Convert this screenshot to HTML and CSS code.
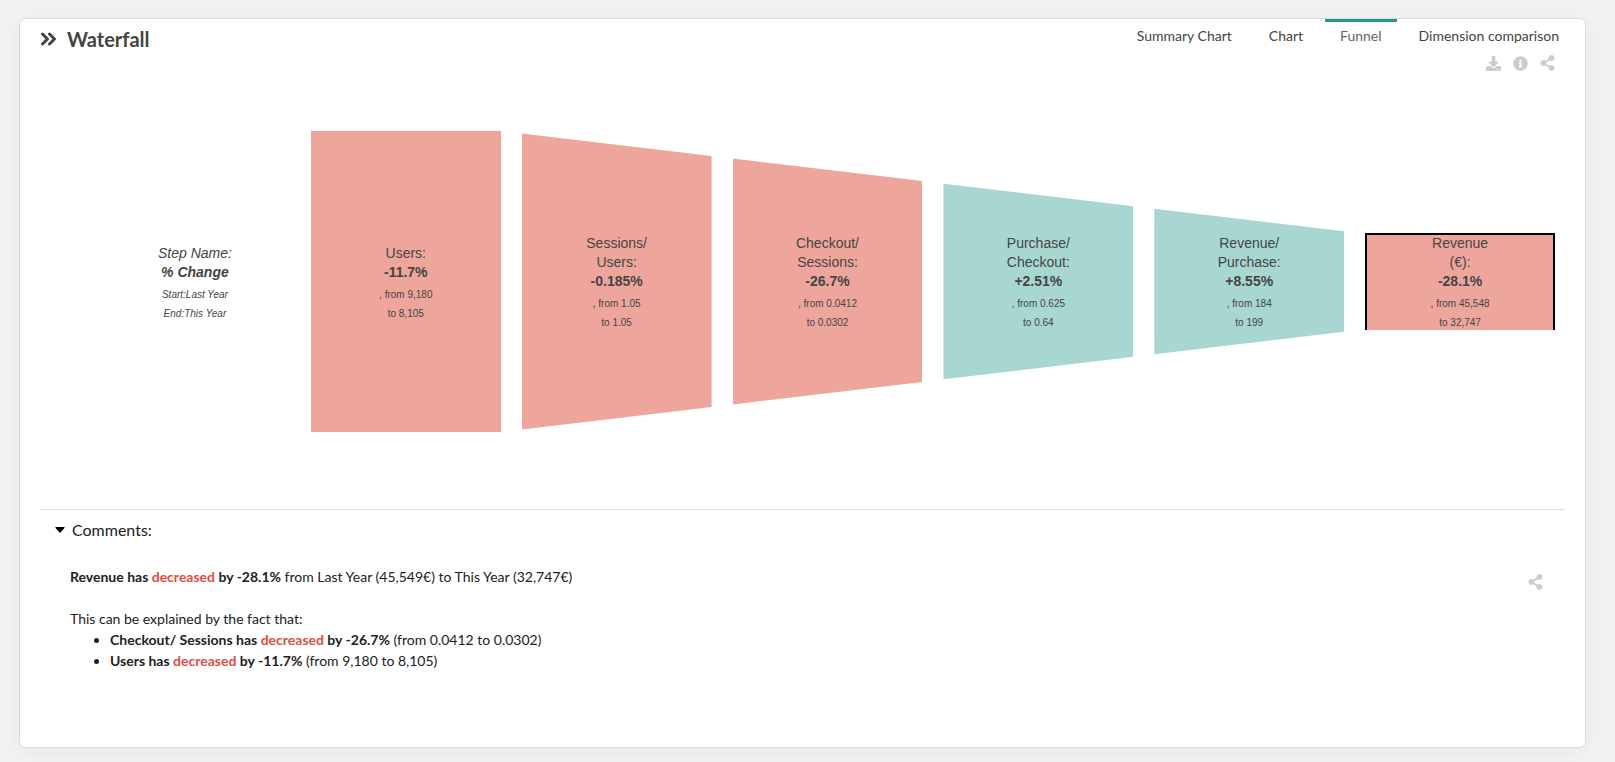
FILE: index.html
```html
<!DOCTYPE html>
<html lang="en">
<head>
<meta charset="utf-8">
<title>Waterfall</title>
<link rel="stylesheet" href="styles.css">
</head>
<body>
<svg class="sprite" aria-hidden="true">
  <symbol id="share" viewBox="0 0 448 512"><path d="M352 320c-22.608 0-43.387 7.819-59.79 20.895l-102.486-64.054a96.551 96.551 0 0 0 0-41.683l102.486-64.054C308.613 184.181 329.392 192 352 192c53.019 0 96-42.981 96-96S405.019 0 352 0s-96 42.981-96 96c0 7.158.79 14.13 2.276 20.841L155.79 180.895C139.387 167.819 118.608 160 96 160c-53.019 0-96 42.981-96 96s42.981 96 96 96c22.608 0 43.387-7.819 59.79-20.895l102.486 64.054A96.301 96.301 0 0 0 256 416c0 53.019 42.981 96 96 96s96-42.981 96-96-42.981-96-96-96z"/></symbol>
</svg>
<main class="card">
  <header class="card-header">
    <h1 class="title">
      <svg class="title-icon" viewBox="0 0 16 14" aria-hidden="true"><path d="M2 2l5 5-5 5M9 2l5 5-5 5"/></svg>
      Waterfall
    </h1>
    <nav class="tabs">
      <a class="tab" href="#summary">Summary Chart</a>
      <a class="tab" href="#chart">Chart</a>
      <a class="tab tab-active" href="#funnel" aria-current="page">Funnel</a>
      <a class="tab" href="#dimension">Dimension comparison</a>
    </nav>
  </header>
  <div class="tools">
    <button class="icon-button" type="button" aria-label="Download"><svg class="icon" viewBox="0 0 512 512"><path d="M216 0h80c13.300 0 24 10.700 24 24v168h87.700c17.800 0 26.700 21.500 14.100 34.100L269.700 378.300c-7.500 7.500-19.800 7.500-27.300 0L90.100 226.100c-12.600-12.600-3.700-34.100 14.100-34.100H192V24c0-13.300 10.700-24 24-24zm296 376v112c0 13.300-10.700 24-24 24H24c-13.300 0-24-10.700-24-24V376c0-13.300 10.700-24 24-24h146.700l49 49c20.100 20.100 52.500 20.100 72.600 0l49-49H488c13.300 0 24 10.700 24 24zm-124 88c0-11-9-20-20-20s-20 9-20 20 9 20 20 20 20-9 20-20zm64 0c0-11-9-20-20-20s-20 9-20 20 9 20 20 20 20-9 20-20z"/></svg></button>
    <button class="icon-button" type="button" aria-label="Information"><svg class="icon" viewBox="0 0 512 512"><path d="M256 8C119.043 8 8 119.083 8 256c0 136.997 111.043 248 248 248s248-111.003 248-248C504 119.083 392.957 8 256 8zm0 110c23.196 0 42 18.804 42 42s-18.804 42-42 42-42-18.804-42-42 18.804-42 42-42zm56 254c0 6.627-5.373 12-12 12h-88c-6.627 0-12-5.373-12-12v-24c0-6.627 5.373-12 12-12h12v-64h-12c-6.627 0-12-5.373-12-12v-24c0-6.627 5.373-12 12-12h64c6.627 0 12 5.373 12 12v100h12c6.627 0 12 5.373 12 12v24z"/></svg></button>
    <button class="icon-button" type="button" aria-label="Share chart"><svg class="icon icon-share"><use href="#share"/></svg></button>
  </div>
  <ol class="funnel">
    <li class="step legend"><span class="name">Step Name:</span><strong class="change">% Change</strong><span class="value">Start:Last Year</span><span class="value">End:This Year</span></li>
    <li class="step down"><span class="name">Users:</span><strong class="change">-11.7%</strong><span class="value">, from 9,180</span><span class="value">to 8,105</span></li>
    <li class="step down level-1"><span class="name">Sessions/<br>Users:</span><strong class="change">-0.185%</strong><span class="value">, from 1.05</span><span class="value">to 1.05</span></li>
    <li class="step down level-2"><span class="name">Checkout/<br>Sessions:</span><strong class="change">-26.7%</strong><span class="value">, from 0.0412</span><span class="value">to 0.0302</span></li>
    <li class="step up level-3"><span class="name">Purchase/<br>Checkout:</span><strong class="change">+2.51%</strong><span class="value">, from 0.625</span><span class="value">to 0.64</span></li>
    <li class="step up level-4"><span class="name">Revenue/<br>Purchase:</span><strong class="change">+8.55%</strong><span class="value">, from 184</span><span class="value">to 199</span></li>
    <li class="step down result"><span class="name">Revenue<br>(€):</span><strong class="change">-28.1%</strong><span class="value">, from 45,548</span><span class="value">to 32,747</span></li>
  </ol>
  <details class="comments" open>
    <summary class="comments-title"><svg class="caret" viewBox="0 0 10 6" aria-hidden="true"><path d="M1 0h8q1 0 .5 1L6 5Q5 6 4 5L.5 1Q0 0 1 0z"/></svg>Comments:</summary>
    <div class="comments-body">
      <div class="comments-text">
        <p class="lead"><b>Revenue has <em class="bad">decreased</em> by -28.1%</b> from Last Year (45,549€) to This Year (32,747€)</p>
        <p class="reason">This can be explained by the fact that:</p>
        <ul class="reasons">
          <li><b>Checkout/ Sessions has <em class="bad">decreased</em> by -26.7%</b> (from 0.0412 to 0.0302)</li>
          <li><b>Users has <em class="bad">decreased</em> by -11.7%</b> (from 9,180 to 8,105)</li>
        </ul>
      </div>
      <button class="icon-button" type="button" aria-label="Share comments"><svg class="icon icon-share"><use href="#share"/></svg></button>
    </div>
  </details>
</main>
</body>
</html>
```
FILE: styles.css
```css
* { box-sizing: border-box; }
body {
  margin: 0;
  padding: 18px 29px 14px 19px;
  min-height: 100vh;
  display: flex;
  background: #f2f2f2;
  color: #212121;
  font: 14px/21px Lato, sans-serif;
}
.sprite { position: absolute; width: 0; height: 0; }
.card {
  flex: 1;
  min-width: 0;
  padding: 0 20px;
  background: #fff;
  border: 1px solid #dcdcdc;
  border-radius: 7px;
  box-shadow: 0 4px 20px rgba(0, 0, 0, .05);
}
.card-header { display: flex; justify-content: space-between; color: #444; }
.title {
  display: flex;
  align-items: center;
  gap: 10px;
  margin: 0;
  padding-top: 6px;
  font-size: 20px;
  line-height: 28px;
  font-weight: 700;
}
.title-icon {
  width: 17px;
  height: 14px;
  fill: none;
  stroke: currentColor;
  stroke-width: 3;
  stroke-linecap: round;
  stroke-linejoin: round;
}
.tabs { display: flex; gap: 7px; margin-right: -9px; }
.tab {
  padding: 3px 15px;
  border-top: 3px solid transparent;
  color: inherit;
  text-decoration: none;
  height: 28px;
}
.tab-active { border-color: #26968a; color: #666; }
.tools { display: flex; justify-content: flex-end; gap: 12px; padding-right: 10px; }
.icon-button {
  display: flex;
  align-items: center;
  padding: 0;
  border: 0;
  background: none;
  color: #ccc;
  height: 20px;
  cursor: pointer;
}
.icon { width: 15px; height: 15px; fill: currentColor; }
.icon-share { height: 16px; }
.funnel {
  display: grid;
  grid-template-columns: repeat(7, minmax(0, 1fr));
  grid-auto-rows: 301px;
  gap: 21px;
  margin: 0;
  padding: 58px 10px 77px 60px;
  list-style: none;
  font-family: "Liberation Sans", Arial, sans-serif;
  color: #444;
}
.step {
  display: flex;
  flex-direction: column;
  align-items: center;
  justify-content: center;
  padding-top: 3px;
  text-align: center;
  line-height: 19px;
}
.legend { font-style: italic; }
.down { background: #eea69c; }
.up { background: #a8d7d1; }
.value { font-size: 10px; }
.change + .value { margin-top: 3px; }
.level-1 { clip-path: polygon(0 .8%, 100% 8.3%, 100% 91.700%, 0 99.200%); }
.level-2 { clip-path: polygon(0 9.1%, 100% 16.600%, 100% 83.400%, 0 90.900%); }
.level-3 { clip-path: polygon(0 17.500%, 100% 25%, 100% 75%, 0 82.500%); }
.level-4 { clip-path: polygon(0 25.800%, 100% 33.300%, 100% 66.700%, 0 74.200%); }
.result {
  align-self: center;
  height: 97px;
  padding-top: 0;
  border: 2px solid #000;
  border-bottom: 0;
}
.comments { border-top: 1px solid #ddd; color: #212121; }
.comments-title {
  display: flex;
  align-items: center;
  gap: 7px;
  padding: 9px 15px 10px;
  font-size: 16px;
  line-height: 22px;
  cursor: pointer;
}
.comments-title::-webkit-details-marker { display: none; }
.caret { width: 10px; height: 6px; fill: #000; }
.comments-body {
  display: flex;
  justify-content: space-between;
  padding: 15px 22px 20px 30px;
}
.comments-body .icon-button { margin-top: 6px; }
.lead { margin: 0 0 21px; }
.reason { margin: 0; }
.reasons { margin: 0; padding-left: 40px; }
.bad { color: #e04f40; font-style: normal; }
```
